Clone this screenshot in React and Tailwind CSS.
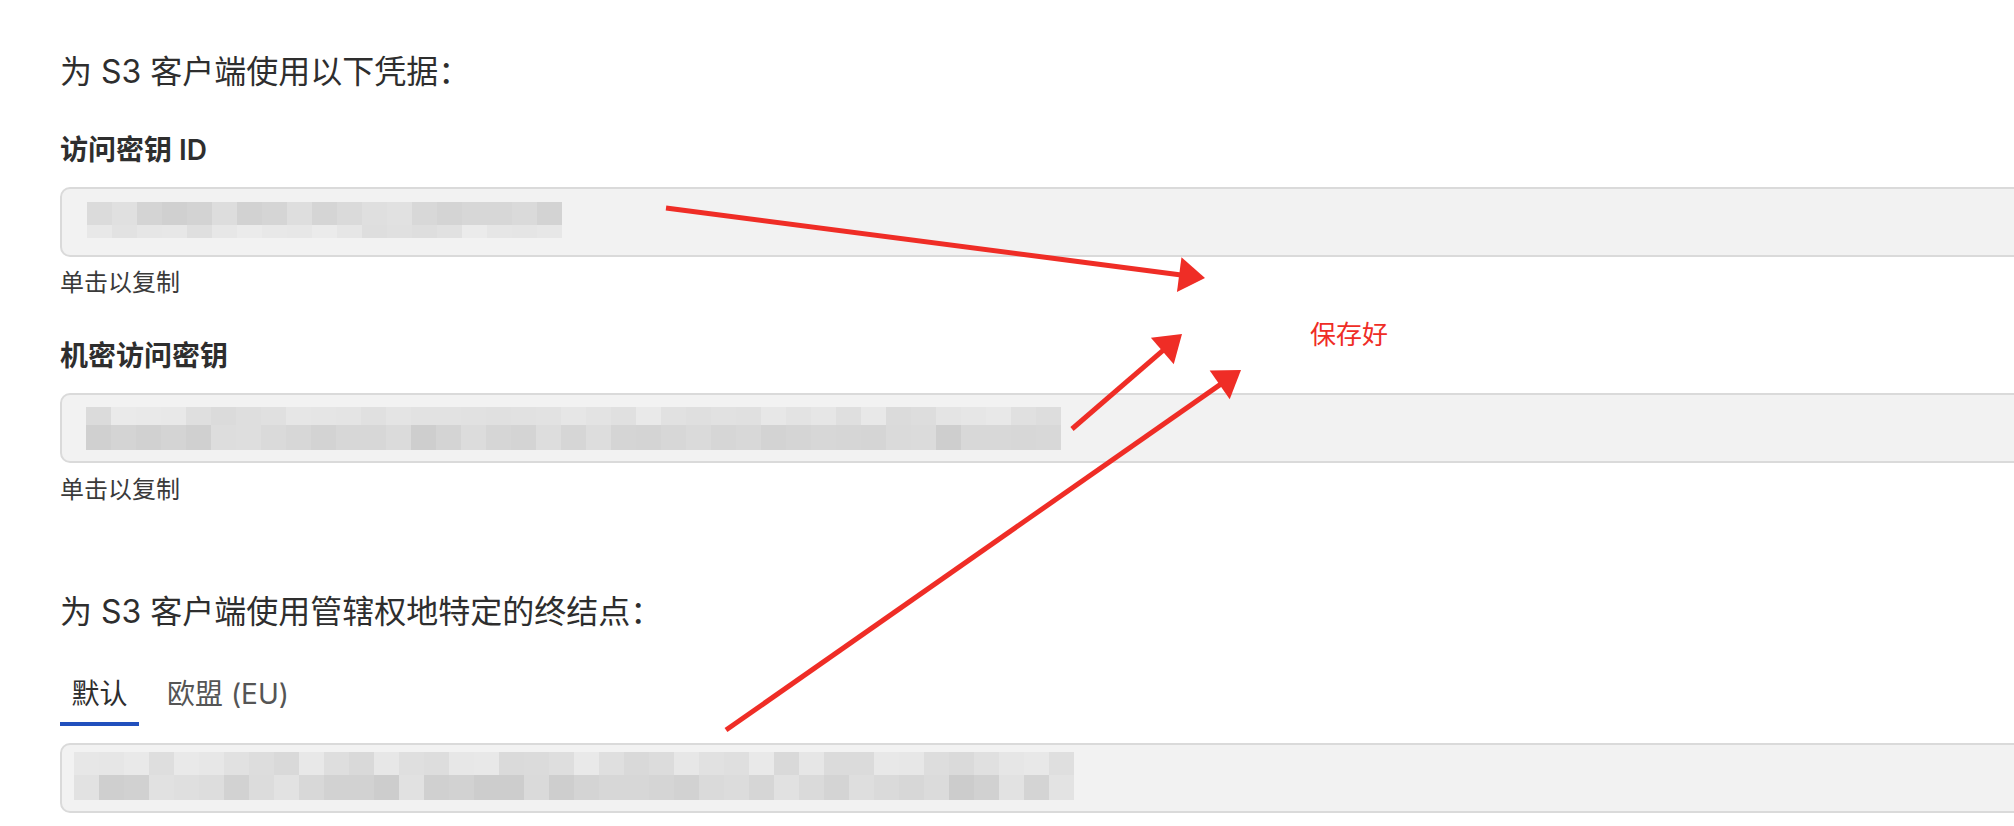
import React from "react";

// deterministic grays for the redacted (mosaic) values
const grays = (seed, n, lo, hi) => {
  let s = seed;
  const out = [];
  for (let i = 0; i < n; i++) {
    s = (s * 9301 + 49297) % 233280;
    const v = Math.round(lo + (s / 233280) * (hi - lo));
    out.push(`rgb(${v},${v},${v})`);
  }
  return out;
};

function Mosaic({ blocks, rows, seed }) {
  const w = blocks * 25;
  const h = rows.reduce((a, r) => a + r.h, 0);
  let y = 0;
  return (
    <svg width={w} height={h} className="block">
      {rows.map((r, ri) => {
        const cols = grays(seed + ri * 77, blocks, r.lo, r.hi);
        const y0 = y;
        y += r.h;
        return cols.map((c, i) => (
          <rect key={`${ri}-${i}`} x={i * 25} y={y0} width={25} height={r.h} fill={c} />
        ));
      })}
    </svg>
  );
}

function Field({ mosaic, padTop, padLeft }) {
  return (
    <div
      className="h-[70px] w-[2100px] rounded-[10px] border-2 border-[#dadada] bg-[#f2f2f2]"
      style={{ paddingTop: padTop, paddingLeft: padLeft }}
    >
      {mosaic}
    </div>
  );
}

function Arrow({ x1, y1, x2, y2 }) {
  const len = 26;
  const wid = 35;
  const dx = x2 - x1;
  const dy = y2 - y1;
  const d = Math.hypot(dx, dy);
  const ux = dx / d;
  const uy = dy / d;
  const bx = x2 - ux * len;
  const by = y2 - uy * len;
  const px = -uy * (wid / 2);
  const py = ux * (wid / 2);
  return (
    <g>
      <line x1={x1} y1={y1} x2={bx + ux * 4} y2={by + uy * 4} stroke="#ef2d26" strokeWidth="5" />
      <polygon points={`${x2},${y2} ${bx + px},${by + py} ${bx - px},${by - py}`} fill="#ef2d26" />
    </g>
  );
}

export default function App() {
  return (
    <div className="relative min-h-[826px] w-full overflow-hidden bg-white pl-[60px] pt-[48px] font-['Inter','Noto_Sans_CJK_SC',sans-serif]">
      <p className="text-[32px] leading-[48px] text-[#2e2e2e]">为 S3 客户端使用以下凭据：</p>

      <p className="mt-[36px] text-[28px] font-semibold leading-[36px] text-[#2e2e2e]">访问密钥 ID</p>
      <div className="mt-[19px]">
        <Field
          padTop={13}
          padLeft={25}
          mosaic={
            <Mosaic
              blocks={19}
              seed={11}
              rows={[
                { h: 23, lo: 206, hi: 226 },
                { h: 13, lo: 222, hi: 236 },
              ]}
            />
          }
        />
      </div>
      <p className="mt-[10px] text-[24px] leading-[32px] text-[#3a3a3a]">单击以复制</p>

      <p className="mt-[39px] text-[28px] font-semibold leading-[36px] text-[#2e2e2e]">机密访问密钥</p>
      <div className="mt-[19px]">
        <Field
          padTop={12}
          padLeft={24}
          mosaic={
            <Mosaic
              blocks={39}
              seed={47}
              rows={[
                { h: 18, lo: 218, hi: 234 },
                { h: 25, lo: 206, hi: 222 },
              ]}
            />
          }
        />
      </div>
      <p className="mt-[11px] text-[24px] leading-[32px] text-[#3a3a3a]">单击以复制</p>

      <p className="mt-[82px] text-[32px] leading-[48px] text-[#2e2e2e]">为 S3 客户端使用管辖权地特定的终结点：</p>

      <div className="mt-[40px] flex gap-4">
        <div className="w-[79px] border-b-4 border-[#2150bd] pb-[10px] text-center text-[28px] leading-[36px] text-[#2e2e2e]">默认</div>
        <div className="px-[12px] pb-[10px] text-[28px] leading-[36px] text-[#555555]">欧盟 (EU)</div>
      </div>

      <div className="mt-[17px]">
        <Field
          padTop={7}
          padLeft={12}
          mosaic={
            <Mosaic
              blocks={40}
              seed={91}
              rows={[
                { h: 23, lo: 216, hi: 234 },
                { h: 25, lo: 204, hi: 228 },
              ]}
            />
          }
        />
      </div>

      {/* annotation layer */}
      <svg className="pointer-events-none absolute left-0 top-0" width="2014" height="826">
        <Arrow x1={666} y1={208} x2={1205} y2={278} />
        <Arrow x1={1072} y1={429} x2={1182} y2={334} />
        <Arrow x1={726} y1={730} x2={1241} y2={370} />
      </svg>
      <div className="absolute left-[1310px] top-[318px] text-[26px] leading-[34px] text-[#ef2d26]">保存好</div>
    </div>
  );
}
